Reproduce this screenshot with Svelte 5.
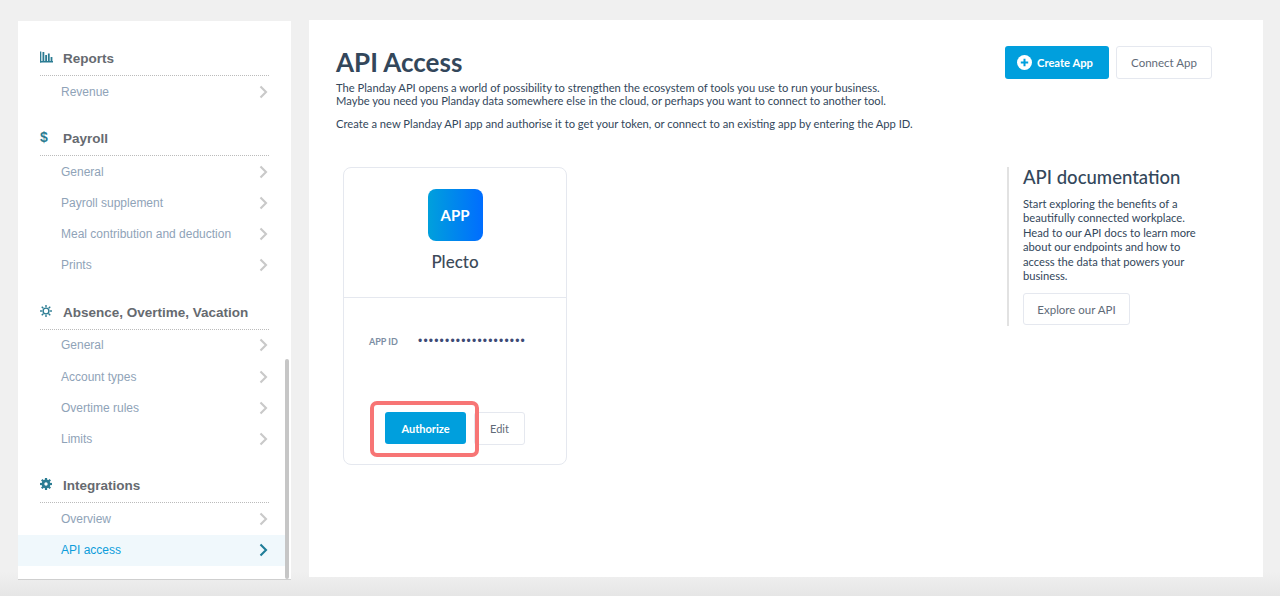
<script>
  const sections = [
    { title: 'Reports', icon: 'bars', items: ['Revenue'] },
    { title: 'Payroll', icon: 'dollar', items: ['General', 'Payroll supplement', 'Meal contribution and deduction', 'Prints'] },
    { title: 'Absence, Overtime, Vacation', icon: 'sun', items: ['General', 'Account types', 'Overtime rules', 'Limits'] },
    { title: 'Integrations', icon: 'gear', items: ['Overview', 'API access'] }
  ];
  const active = 'API access';
  const rays = [0, 45, 90, 135, 180, 225, 270, 315];
</script>

<div class="page">
  <aside class="sidebar">
    {#each sections as section}
      <section class="group">
        <h3 class="group-title">
          <span class="group-icon">
            {#if section.icon === 'bars'}
              <svg width="13" height="12" viewBox="0 0 13 12" fill="#2b7c93">
                <rect x="0" y="0.5" width="1.3" height="11" />
                <rect x="0" y="10" width="13" height="1.5" />
                <rect x="2.5" y="1" width="1.8" height="9" />
                <rect x="5.2" y="4" width="1.8" height="6" />
                <rect x="7.9" y="2.5" width="1.8" height="7.5" />
                <rect x="10.6" y="6" width="1.8" height="4" />
              </svg>
            {:else if section.icon === 'dollar'}
              <span class="dollar">$</span>
            {:else if section.icon === 'sun'}
              <svg width="12" height="12" viewBox="0 0 12 12" fill="none" stroke="#2b7c93">
                <circle cx="6" cy="6" r="2.9" stroke-width="1.4" />
                {#each rays as r}
                  <line x1="6" y1="0" x2="6" y2="2.2" stroke-width="1.4" transform="rotate({r} 6 6)" />
                {/each}
              </svg>
            {:else}
              <svg width="12" height="12" viewBox="0 0 12 12" fill="#2b7c93">
                <path fill-rule="evenodd" d="M6 1.6a4.4 4.4 0 1 0 0 8.8 4.4 4.4 0 0 0 0-8.8zM6 4.3a1.7 1.7 0 1 1 0 3.4 1.7 1.7 0 0 1 0-3.4z" />
                {#each rays as r}
                  <rect x="4.9" y="0" width="2.2" height="2.6" transform="rotate({r} 6 6)" />
                {/each}
              </svg>
            {/if}
          </span>
          {section.title}
        </h3>
        <ul class="rows">
          {#each section.items as item}
            <li class="row" class:active={item === active}>
              <span>{item}</span>
              <svg class="chevron" width="9" height="14" viewBox="0 0 9 14" fill="none">
                <path d="M1.5 1.5 7 7l-5.5 5.5" stroke="currentColor" stroke-width="2.1" />
              </svg>
            </li>
          {/each}
        </ul>
      </section>
    {/each}
    <div class="scrollbar"></div>
  </aside>

  <main class="content">
    <header class="top">
      <div class="intro">
        <h1>API Access</h1>
        <p>The Planday API opens a world of possibility to strengthen the ecosystem of tools you use to run your business.<br />Maybe you need you Planday data somewhere else in the cloud, or perhaps you want to connect to another tool.</p>
        <p>Create a new Planday API app and authorise it to get your token, or connect to an existing app by entering the App ID.</p>
      </div>
      <div class="actions">
        <button class="btn primary create">
          <svg width="15" height="15" viewBox="0 0 15 15">
            <circle cx="7.5" cy="7.5" r="7.5" fill="#fff" />
            <path d="M7.5 3.8v7.4M3.8 7.5h7.4" stroke="#009fdd" stroke-width="2" />
          </svg>
          Create App
        </button>
        <button class="btn outline connect">Connect App</button>
      </div>
    </header>

    <div class="body">
      <article class="card">
        <div class="card-head">
          <div class="logo">APP</div>
          <div class="name">Plecto</div>
        </div>
        <div class="card-body">
          <div class="app-id">
            <span class="label">APP ID</span>
            <span class="dots">••••••••••••••••••••</span>
          </div>
          <div class="card-actions">
            <button class="btn primary authorize">Authorize</button>
            <button class="btn outline edit">Edit</button>
            <div class="callout"></div>
          </div>
        </div>
      </article>

      <div class="docs">
        <h2>API documentation</h2>
        <p>Start exploring the benefits of a beautifully connected workplace. Head to our API docs to learn more about our endpoints and how to access the data that powers your business.</p>
        <button class="btn outline explore">Explore our API</button>
      </div>
    </div>
  </main>
</div>

<style>
  :global(body) {
    background: linear-gradient(#f0f0f0 572px, #e6e6e6 596px);
    margin: 0;
  }

  .page {
    display: flex;
    align-items: flex-start;
    height: 596px;
    box-sizing: border-box;
    padding: 20px 17px 0 18px;
    gap: 18px;
    overflow: hidden;
  }

  .sidebar {
    position: relative;
    width: 273px;
    height: 558px;
    margin-top: 1px;
    flex: none;
    box-sizing: border-box;
    padding: 21px 22px 0 22px;
    background: #fff;
    box-shadow: 0 1px 0 #cfcfcf;
    overflow: hidden;
    font-family: "Liberation Sans", Arial, sans-serif;
  }

  .group {
    margin-bottom: 14.7px;
  }

  .group-title {
    display: flex;
    align-items: center;
    height: 34px;
    box-sizing: border-box;
    margin: 0;
    font-size: 13.5px;
    font-weight: 700;
    color: #666a70;
    border-bottom: 1px dotted #bbb;
  }

  .group-icon {
    display: flex;
    align-items: center;
    width: 23px;
    flex: none;
    margin-top: -3px;
  }

  .dollar {
    font-size: 14px;
    color: #2b7c93;
  }

  .rows {
    list-style: none;
    margin: 0 -16px 0 -22px;
    padding: 0;
  }

  .row {
    display: flex;
    align-items: center;
    justify-content: space-between;
    height: 31.25px;
    padding: 0 17px 0 43px;
    font-size: 12px;
    color: #8fa3b8;
  }

  .row .chevron {
    color: #c9c9c9;
  }

  .row.active {
    background: #f0f8fc;
    color: #0d9ddb;
  }

  .row.active .chevron {
    color: #1f7d98;
  }

  .scrollbar {
    position: absolute;
    right: 2px;
    bottom: 0;
    width: 4px;
    height: 220px;
    background: #c6c6c6;
    border-radius: 2px;
  }

  .content {
    flex: 1;
    height: 557px;
    box-sizing: border-box;
    padding: 26px 51px 0 27px;
    background: #fff;
    font-family: Lato, "Open Sans", sans-serif;
    color: #33475b;
  }

  .top {
    display: flex;
    justify-content: space-between;
    align-items: flex-start;
  }

  h1 {
    margin: 0 0 3px;
    font-size: 26px;
    line-height: 32px;
    font-weight: 700;
    color: #33475b;
  }

  .intro p {
    margin: 0 0 10px;
    font-size: 11.2px;
    line-height: 13px;
  }

  .actions {
    display: flex;
    gap: 7px;
  }

  .btn {
    box-sizing: border-box;
    height: 33px;
    padding: 0;
    border-radius: 3px;
    font-family: inherit;
    font-size: 11.5px;
    cursor: pointer;
  }

  .primary {
    border: none;
    background: #009fdd;
    color: #fff;
    font-weight: 700;
  }

  .outline {
    border: 1.5px solid #e5e8ef;
    background: #fff;
    color: #5f6b78;
  }

  .create {
    display: flex;
    align-items: center;
    gap: 5px;
    width: 104px;
    padding-left: 12px;
    font-size: 11.2px;
  }

  .connect {
    width: 96px;
  }

  .body {
    display: flex;
    justify-content: space-between;
    align-items: flex-start;
    margin-top: 27px;
    padding-left: 7px;
  }

  .card {
    width: 224px;
    height: 298px;
    box-sizing: border-box;
    border: 1.5px solid #e5e8ef;
    border-radius: 8px;
  }

  .card-head {
    display: flex;
    flex-direction: column;
    align-items: center;
    height: 130px;
    box-sizing: border-box;
    padding-top: 21px;
    border-bottom: 1px solid #e5e8ef;
  }

  .logo {
    display: flex;
    align-items: center;
    justify-content: center;
    width: 55px;
    height: 52px;
    border-radius: 8px;
    background: linear-gradient(90deg, #00a0dc, #006dff);
    color: #fff;
    font-size: 15px;
    font-weight: 700;
  }

  .name {
    margin-top: 11px;
    font-size: 17px;
    line-height: 20px;
    font-weight: 500;
    color: #3c4a59;
  }

  .card-body {
    padding: 36px 0 0 25px;
  }

  .app-id {
    display: flex;
    align-items: center;
    height: 14px;
  }

  .label {
    width: 49px;
    font-size: 9px;
    font-weight: 700;
    color: #7c8ea3;
  }

  .dots {
    font-family: "Liberation Sans", sans-serif;
    font-size: 12px;
    letter-spacing: 1.2px;
    color: #3d4a75;
  }

  .card-actions {
    position: relative;
    display: flex;
    gap: 8px;
    margin: 64px 0 0 16px;
  }

  .authorize {
    width: 81px;
    height: 32px;
    font-size: 11px;
  }

  .edit {
    width: 51px;
    font-size: 11px;
  }

  .callout {
    position: absolute;
    left: -15px;
    top: -11px;
    width: 109px;
    height: 56px;
    box-sizing: border-box;
    border: 4.5px solid #f77575;
    border-radius: 7px;
  }

  .docs {
    width: 205px;
    height: 159px;
    box-sizing: border-box;
    border-left: 2px solid #e2e2e2;
    padding-left: 14px;
  }

  .docs h2 {
    margin: 0 0 10px;
    font-size: 18.5px;
    line-height: 20px;
    font-weight: 500;
    color: #33475b;
  }

  .docs p {
    margin: 0 0 10px;
    font-size: 11.2px;
    line-height: 14.4px;
  }

  .explore {
    width: 107px;
    height: 32px;
  }
</style>
